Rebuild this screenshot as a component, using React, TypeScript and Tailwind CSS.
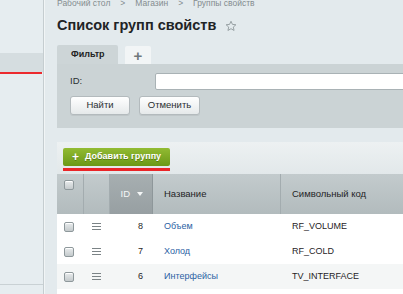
import React from "react";

const rows = [
  { id: 8, name: "Объем", code: "RF_VOLUME", bg: "bg-white" },
  { id: 7, name: "Холод", code: "RF_COLD", bg: "bg-white" },
  { id: 6, name: "Интерфейсы", code: "TV_INTERFACE", bg: "bg-[#f4f6f6]" },
];

function Check() {
  return (
    <div className="w-[10px] h-[10px] rounded-[2px] border border-[#8e989b] bg-gradient-to-b from-[#e9eced] to-[#c4cacc] shadow-[inset_0_1px_0_#fff]" />
  );
}

function Burger() {
  return (
    <div className="flex flex-col gap-[2px] w-[9px]">
      <div className="h-[1px] bg-[#7b8386]" />
      <div className="h-[1px] bg-[#7b8386]" />
      <div className="h-[1px] bg-[#7b8386]" />
    </div>
  );
}

export default function App() {
  return (
    <div className="flex w-[403px] h-[294px] overflow-hidden bg-[#e3eaed] font-['Liberation_Sans',Arial,sans-serif] text-[#2a2f31]">
      <aside className="w-[44px] shrink-0 flex flex-col bg-[#e6edf0] border-r border-[#c5cdd0]">
        <div className="h-[53px]" />
        <div className="h-[19px] bg-[#d5dde0]" />
        <div className="h-[2px] bg-[#ec2a2e] mr-[1px]" />
        <div className="h-[210px]" />
        <div className="h-[1px] bg-[#c9d1d4]" />
        <div className="flex-1" />
      </aside>
      <main className="flex-1 min-w-0 pl-[12px] border-l border-[#f1f5f6]">
        <div className="w-[420px]">
          <div className="mt-[-2px] h-[10px] flex items-center gap-[10px] text-[8.5px] leading-[10px] text-[#848c8f]">
            <span>Рабочий стол</span>
            <span>&gt;</span>
            <span>Магазин</span>
            <span>&gt;</span>
            <span>Группы свойств</span>
          </div>
          <div className="mt-[8px] h-[18px] flex items-center gap-[9px]">
            <h1 className="text-[14.5px] leading-[18px] font-bold text-[#1f2426]">Список групп свойств</h1>
            <svg width="12" height="12" viewBox="0 0 24 24" className="mt-[1px]">
              <path d="M12 2.5l2.9 6.3 6.9.7-5.2 4.6 1.5 6.8L12 17.4l-6.1 3.5 1.5-6.8-5.2-4.6 6.9-.7z" fill="none" stroke="#98a1a4" strokeWidth="2" strokeLinejoin="round" />
            </svg>
          </div>
          <div className="mt-[11px] flex items-end gap-[7px] h-[19px]">
            <div className="w-[61px] h-[19px] bg-[#cdd5d7] rounded-t-[2px] flex items-center pl-[14px] text-[9px] font-bold text-[#222]">
              Фильтр
            </div>
            <div className="w-[26px] h-[18px] bg-[#f2f5f6] rounded-t-[2px] flex items-center justify-center text-[15px] font-bold text-[#6f787b] leading-none">
              +
            </div>
          </div>
          <div className="h-[64px] bg-[#cbd3d5] pl-[13px] pt-[9px]">
            <div className="flex items-center h-[17px]">
              <span className="w-[85px] text-[9.5px] text-[#2a2f31]">ID:</span>
              <div className="flex-1 h-[17px] bg-white border border-[#a9b2b5] rounded-[2px]" />
            </div>
            <div className="mt-[6px] flex gap-[9px]">
              <div className="w-[60px] h-[19px] rounded-[3px] border border-[#b3babd] bg-gradient-to-b from-white to-[#e5e9ea] flex items-center justify-center text-[9.5px] text-[#2a2f31] shadow-[0_1px_0_#bfc6c8]">
                Найти
              </div>
              <div className="w-[61px] h-[19px] rounded-[3px] border border-[#b3babd] bg-gradient-to-b from-white to-[#e5e9ea] flex items-center justify-center text-[9.5px] text-[#2a2f31] shadow-[0_1px_0_#bfc6c8]">
                Отменить
              </div>
            </div>
          </div>
          <div className="mt-[14px] h-[32px] bg-gradient-to-b from-[#edf1f2] to-[#e2e8ea] pl-[6px] pt-[6px]">
            <div className="w-[107px] h-[18px] rounded-[2px] bg-gradient-to-b from-[#92bb32] to-[#6b9816] flex items-center pl-[9px] gap-[6px] text-white text-[9px] font-bold [text-shadow:0_1px_0_#577a12]">
              <span className="text-[12px] leading-none">+</span>
              <span>Добавить группу</span>
            </div>
            <div className="w-[107px] h-[3px] mt-[2px] bg-[#ea2528]" />
          </div>
          <div className="flex h-[40px] bg-gradient-to-b from-[#c3cbcd] to-[#b2bbbd] text-[9.5px]">
            <div className="w-[27px] border-r border-[#a3acaf] pt-[6px] pl-[7px]">
              <Check />
            </div>
            <div className="w-[26px] border-r border-[#a3acaf]" />
            <div className="w-[43px] border-r border-[#8e979a] bg-gradient-to-b from-[#a7afb1] to-[#979fa2] flex items-center justify-end pr-[9px] gap-[7px] text-[#f4f6f6]">
              <span>ID</span>
              <svg width="6" height="4" viewBox="0 0 6 4"><path d="M0 0h6L3 4z" fill="#f4f6f6" /></svg>
            </div>
            <div className="w-[128px] border-r border-[#a3acaf] flex items-center pl-[11px] text-[#1f2426]">Название</div>
            <div className="flex-1 flex items-center pl-[11px] text-[#1f2426]">Символьный код</div>
          </div>
          {rows.map((r) => (
            <div key={r.id} className={`flex h-[25px] items-center text-[9px] ${r.bg}`}>
              <div className="w-[27px] pl-[7px]"><Check /></div>
              <div className="w-[26px] pl-[8px]"><Burger /></div>
              <div className="w-[43px] text-right pr-[10px] text-[#1f2426]">{r.id}</div>
              <div className="w-[128px] pl-[11px] text-[#2b62a4]">{r.name}</div>
              <div className="flex-1 pl-[11px] text-[#1f2426]">{r.code}</div>
            </div>
          ))}
          <div className="h-[10px] bg-white" />
        </div>
      </main>
    </div>
  );
}
